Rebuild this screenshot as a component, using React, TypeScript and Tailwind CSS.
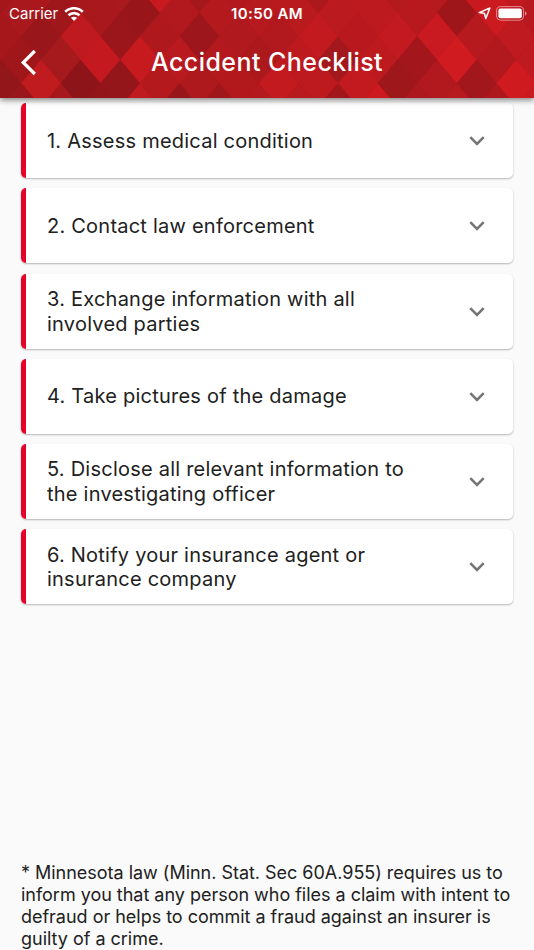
const checklist = [
	"1. Assess medical condition",
	"2. Contact law enforcement",
	"3. Exchange information with all involved parties",
	"4. Take pictures of the damage",
	"5. Disclose all relevant information to the investigating officer",
	"6. Notify your insurance agent or insurance company",
]

// harlequin pattern: every second row is shifted by half a diamond
const STEP_X = 19.8
const STEP_Y = 23.5

const patternRows = [
	{ x: 1.4, y: -10.5, colors: ["#a3161b", "#ab181c", "#a5181b", "#a9191d", "#c8191f", "#a4181c", "#b2191e", "#b81a1e", "#ab191d", "#bd1a1f", "#b4191d", "#b6191e", "#c8191f", "#c01a1f"] },
	{ x: 21.2, y: 13, colors: ["#a8181c", "#9f171b", "#a8181c", "#98161a", "#b2191e", "#b4191e", "#b61a1e", "#b81a1e", "#bb1a1f", "#bd1a1f", "#b8191e", "#9e161a", "#cb1a20", "#b8191e"] },
	{ x: 1.4, y: 36.5, colors: ["#a5171b", "#99161a", "#bf1a1f", "#9a161a", "#af191d", "#9c161b", "#b0191d", "#b2191e", "#c21a1f", "#b9191e", "#c21a20", "#c81a20", "#b6191e", "#be1a1f"] },
	{ x: 21.2, y: 60, colors: ["#a0171b", "#a6191d", "#c41a1f", "#c71a1f", "#b91a1f", "#b4191e", "#ac191d", "#bd1a1f", "#a2181c", "#bd1a1f", "#a3171c", "#d01b20", "#b2191e", "#bf1a1f"] },
	{ x: 1.4, y: 83.5, colors: ["#93161a", "#c01b1f", "#8d1519", "#95161a", "#b4191e", "#ad191d", "#b1191d", "#c21a1f", "#bc1a1f", "#c31a1f", "#9d171b", "#b1191e", "#a2171b", "#cf1b20"] },
	{ x: 21.2, y: 107, colors: ["#99161a", "#a6181c", "#93151a", "#be1a1f", "#98161a", "#a0171b", "#b3191e", "#b91a1f", "#a2171b", "#cc1a20", "#ac181d", "#b6191e", "#ad181d", "#c81a20"] },
]

function HeaderPattern() {
	return (
		<svg className="absolute inset-0 h-full w-full" viewBox="0 0 534 98" preserveAspectRatio="none">
			<rect width="534" height="98" fill="#a8181c" />
			{patternRows.map((row) =>
				row.colors.map((color, index) => {
					const x = row.x + index * STEP_X * 2
					return (
						<path
							key={`${row.y}-${index}`}
							d={`M${x - STEP_X} ${row.y}L${x} ${row.y - STEP_Y}L${x + STEP_X} ${row.y}L${x} ${row.y + STEP_Y}Z`}
							fill={color}
							stroke={color}
							strokeWidth="0.4"
						/>
					)
				})
			)}
		</svg>
	)
}

function StatusBar() {
	return (
		<div className="relative grid h-7 grid-cols-3 items-center pl-[9px] pr-[7px] text-[15px]">
			<div className="flex items-center gap-[6px]">
				<span>Carrier</span>
				<svg width="20" height="15" viewBox="0 0 20 15" fill="none" stroke="white" strokeWidth="2.6">
					<path d="M1.2 4.8C6.2 0 13.8 0 18.8 4.8" />
					<path d="M4.5 8.3C7.7 5.4 12.3 5.4 15.5 8.3" />
					<path d="M10 14L6.9 10.8C8.7 9.3 11.3 9.3 13.1 10.8Z" fill="white" stroke="none" />
				</svg>
			</div>
			<span className="-ml-0.5 text-center font-semibold tracking-[0.4px]">10:50 AM</span>
			<div className="-mt-px flex items-center justify-end gap-[5px]">
				<svg width="13" height="13" viewBox="0 0 13 13" fill="none" stroke="white" strokeWidth="1.5" strokeLinejoin="round">
					<path d="M11.9 1L7.8 11.5L6.5 6.5L1.2 5.6Z" />
				</svg>
				<svg width="31" height="15" viewBox="0 0 31 15">
					<rect x=".6" y=".6" width="27" height="13.6" rx="4" fill="none" stroke="white" strokeOpacity=".5" />
					<rect x="2.4" y="2.5" width="23.4" height="9.8" rx="2" fill="white" />
					<path d="M29 5.2Q30.6 6 30.6 7.4T29 9.7Z" fill="white" fillOpacity=".5" />
				</svg>
			</div>
		</div>
	)
}

export default function App() {
	return (
		<div className="flex h-[950px] w-[534px] flex-col overflow-hidden bg-[#fafafa] font-['Inter',sans-serif] text-[#212121]">
			<header className="relative z-10 h-[98px] shrink-0 text-white shadow-[0_2px_6px_rgba(0,0,0,0.5)]">
				<HeaderPattern />
				<StatusBar />
				<div className="relative flex h-[70px] items-center justify-center">
					<button className="absolute left-5 top-5 cursor-pointer" aria-label="Back">
						<svg width="18" height="28" viewBox="0 0 18 28" fill="none" stroke="white" strokeWidth="3.2">
							<path d="M14.8 3L3.2 14.5L14.8 26" />
						</svg>
					</button>
					<h1 className="text-[25px] font-medium tracking-[0.45px]">Accident Checklist</h1>
				</div>
			</header>
			<main className="flex flex-col gap-[10.2px] px-[21px] pt-[5.2px]">
				{checklist.map((item, index) => {
					return <ChecklistItem key={index} title={item} />
				})}
			</main>
			<footer className="mt-auto px-[21px] pb-0">
				<p className="w-[505px] text-[18px] leading-[22px] tracking-[-0.02px]">
					* Minnesota law (Minn. Stat. Sec 60A.955) requires us to<br />
					inform you that any person who files a claim with intent to<br />
					defraud or helps to commit a fraud against an insurer is<br />
					guilty of a crime.
				</p>
			</footer>
		</div>
	)
}

type ChecklistItemProps = {
	title: string;
}

function ChecklistItem({title}: ChecklistItemProps) {
	return (
		<article className="flex h-[75px] items-center overflow-hidden rounded-[5px] bg-white shadow-[0_1px_2px_rgba(0,0,0,0.28)]">
			<span className="w-[5px] self-stretch bg-[#e9002a]" />
			<h2 className="ml-[21px] w-[375px] pt-px text-[20px] leading-[24.6px] tracking-[0.23px]">{title}</h2>
			<svg className="ml-auto mr-7 mt-px" width="16" height="10" viewBox="0 0 16 10" fill="none" stroke="#757575" strokeWidth="2.6">
				<path d="M1.3 1.2L8 7.9L14.7 1.2" />
			</svg>
		</article>
	)
}
